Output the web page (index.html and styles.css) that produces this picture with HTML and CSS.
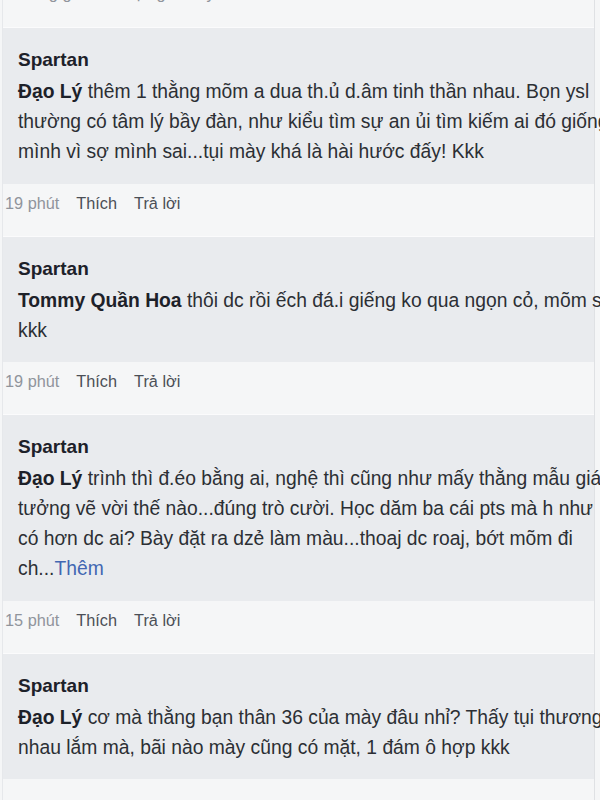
FILE: index.html
```html
<!DOCTYPE html>
<html lang="vi">
<head>
<meta charset="utf-8">
<title>Bình luận</title>
<link rel="stylesheet" href="styles.css">
</head>
<body>
<div class="feed">
  <div class="meta top"><span class="cut">Đang gõ bình luận gần đây</span></div>

  <div class="bubble">
    <div class="name">Spartan</div>
    <div class="text">
      <div class="line"><b>Đạo Lý</b> thêm 1 thằng mõm a dua th.ủ d.âm tinh thần nhau. Bọn ysl</div>
      <div class="line">thường có tâm lý bầy đàn, như kiểu tìm sự an ủi tìm kiếm ai đó giống</div>
      <div class="line">mình vì sợ mình sai...tụi mày khá là hài hước đấy! Kkk</div>
    </div>
  </div>
  <div class="meta"><span class="time">19 phút</span><span class="act">Thích</span><span class="act">Trả lời</span></div>

  <div class="bubble">
    <div class="name">Spartan</div>
    <div class="text">
      <div class="line"><b>Tommy Quần Hoa</b> thôi dc rồi ếch đá.i giếng ko qua ngọn cỏ, mõm sủa</div>
      <div class="line">kkk</div>
    </div>
  </div>
  <div class="meta"><span class="time">19 phút</span><span class="act">Thích</span><span class="act">Trả lời</span></div>

  <div class="bubble">
    <div class="name">Spartan</div>
    <div class="text">
      <div class="line"><b>Đạo Lý</b> trình thì đ.éo bằng ai, nghệ thì cũng như mấy thằng mẫu giáo</div>
      <div class="line">tưởng vẽ vời thế nào...đúng trò cười. Học dăm ba cái pts mà h như</div>
      <div class="line">có hơn dc ai? Bày đặt ra dzẻ làm màu...thoaj dc roaj, bớt mõm đi</div>
      <div class="line">ch...<span class="more">Thêm</span></div>
    </div>
  </div>
  <div class="meta"><span class="time">15 phút</span><span class="act">Thích</span><span class="act">Trả lời</span></div>

  <div class="bubble">
    <div class="name">Spartan</div>
    <div class="text">
      <div class="line"><b>Đạo Lý</b> cơ mà thằng bạn thân 36 của mày đâu nhỉ? Thấy tụi thương</div>
      <div class="line">nhau lắm mà, bãi nào mày cũng có mặt, 1 đám ô hợp kkk</div>
    </div>
  </div>
  <div class="meta"></div>
</div>
</body>
</html>
```

FILE: styles.css
```css
html, body {
  margin: 0;
  padding: 0;
  background: #f5f6f7;
  overflow: hidden;
  width: 600px;
  height: 800px;
}

.feed {
  width: 591px;
  margin-left: 2px;
  border-left: 1px solid #e6e8eb;
  border-right: 1px solid #dfe1e4;
  font-family: "Liberation Sans", Arial, sans-serif;
  color: #1d2129;
}

.meta {
  height: 53px;
  box-sizing: border-box;
  background: #f5f6f7;
  display: flex;
  align-items: flex-start;
  gap: 17px;
  padding: 9px 0 0 2px;
  font-size: 16.3px;
  line-height: 20px;
  border-bottom: 1px solid #fbfbfc;
}

.meta.top {
  height: 28px;
  padding-top: 0;
  overflow: hidden;
}

.cut {
  color: #90949c;
  line-height: 20px;
  margin-top: -17px;
  padding-left: 14px;
}

.time {
  color: #90949c;
}

.act {
  color: #4b4f56;
}

.bubble {
  background: #e9ebee;
  padding: 17px 0 16.5px 15px;
}

.name {
  font-size: 19px;
  font-weight: bold;
  line-height: 30px;
  margin-bottom: 2px;
  color: #1d2129;
}

.text {
  font-size: 19.3px;
  line-height: 30px;
  color: #2c2f34;
}

.line {
  white-space: nowrap;
}

.line b {
  color: #1d2129;
}

.more {
  color: #4267b2;
}
```
